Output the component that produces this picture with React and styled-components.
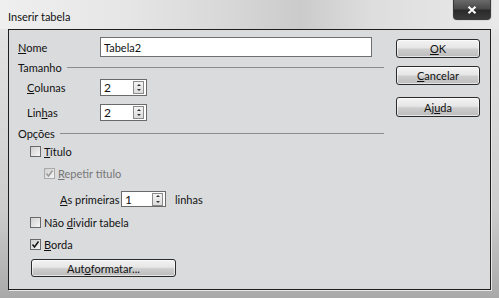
import React from 'react';
import styled, { createGlobalStyle } from 'styled-components';

const Global = createGlobalStyle`
    html, body {
        margin: 0;
        padding: 0;
        background: #d0d0d0;
    }
    body {
        font-family: Lato, "Noto Sans", sans-serif;
        font-size: 11px;
        color: #111;
    }
`

const Window = styled.div`
    width: 499px;
    height: 298px;
    display: flex;
    flex-direction: column;
    background: linear-gradient(180deg, #f4f4f4 0%, #e2e2e2 12%, #cdcdcd 70%, #a9a9a9 100%);
    overflow: hidden;
`

const TitleBar = styled.div`
    height: 29px;
    display: flex;
    align-items: flex-start;
    padding: 0 8px 0 8px;
    box-sizing: border-box;
    background: linear-gradient(90deg, #efefef 0%, #e6e6e6 25%, #d8d8d8 45%, #cbcbcb 60%, #dedede 75%, #e9e9e9 100%);
`

const Title = styled.span`
    font-size: 11px;
    color: #111;
    margin-top: 10px;
`

const CloseButton = styled.div`
    margin-left: auto;
    width: 38px;
    height: 20px;
    box-sizing: border-box;
    border: 1px solid #3a3a3a;
    border-top: none;
    border-radius: 0 0 4px 4px;
    background: linear-gradient(180deg, #6a6a6a 0%, #4a4a4a 45%, #2a2a2a 55%, #3a3a3a 100%);
    display: flex;
    align-items: center;
    justify-content: center;
    box-shadow: 0 0 0 1px #d8d8d8;
`

const Client = styled.div`
    flex: 1;
    margin: 0 8px 8px 8px;
    border: 1px solid #1e1e1e;
    background: #dadbdd;
    display: flex;
    box-shadow: 1px 1px 0 #e8e8e8;
`

const Form = styled.div`
    width: 375px;
    padding-top: 7px;
    box-sizing: border-box;
    display: flex;
    flex-direction: column;
`

const Buttons = styled.div`
    margin-left: 12px;
    padding-top: 9px;
    display: flex;
    flex-direction: column;
`

const Row = styled.div`
    display: flex;
    align-items: center;
    height: ${p => p.$h || 14}px;
    margin-top: ${p => p.$mt || 0}px;
    padding-left: ${p => p.$indent || 0}px;
`

const Label = styled.span`
    width: ${p => p.$w ? `${p.$w}px` : 'auto'};
    margin-left: ${p => p.$ml || 0}px;
    flex-shrink: 0;
    color: ${p => p.$disabled ? '#767676' : '#111'};
    white-space: nowrap;
`

const TextInput = styled.div`
    flex: 1;
    margin-right: 12px;
    height: 20px;
    box-sizing: border-box;
    border: 1px solid #707070;
    background: #fff;
    display: flex;
    align-items: center;
    padding-left: 3px;
`

const HeaderRow = styled.div`
    display: flex;
    align-items: center;
    height: 14px;
    padding-left: 9px;
    margin-top: ${p => p.$mt}px;
`

const HeaderLine = styled.div`
    flex: 1;
    margin-left: 5px;
    border-top: 1px solid #8c8c8c;
`

const SpinBox = styled.div`
    width: ${p => p.$w}px;
    height: ${p => p.$h}px;
    box-sizing: border-box;
    border: 1px solid #6a6a6a;
    background: #fff;
    display: flex;
    align-items: center;
    padding: 0 2px 0 3px;
`

const SpinValue = styled.span`
    flex: 1;
    font-size: 12px;
`

const SpinArrows = styled.div`
    width: 11px;
    height: 13px;
    box-sizing: border-box;
    border: 1px solid #8a8a8a;
    background: linear-gradient(180deg, #f4f4f4, #dcdcdc);
    display: flex;
    flex-direction: column;
    align-items: center;
    justify-content: space-around;
`

const Arrow = styled.div`
    width: 0;
    height: 0;
    border-left: 2px solid transparent;
    border-right: 2px solid transparent;
    ${p => p.$down ? 'border-top: 2px solid #333;' : 'border-bottom: 2px solid #333;'}
`

const Box = styled.div`
    width: 11px;
    height: 11px;
    box-sizing: border-box;
    border: 1px solid ${p => p.$disabled ? '#a8a8a8' : '#6a6a6a'};
    background: linear-gradient(135deg, #d0d0d0, #f6f6f6);
    display: flex;
    align-items: center;
    justify-content: center;
    margin-right: 3px;
`

const Button = styled.div`
    width: ${p => p.$w || 84}px;
    height: ${p => p.$h || 19}px;
    margin-top: ${p => p.$mt || 0}px;
    margin-left: ${p => p.$ml || 0}px;
    box-sizing: border-box;
    border: 1px solid #2b2b2b;
    border-radius: 3px;
    background: linear-gradient(180deg, #f3f3f3 0%, #e6e6e6 45%, #cdcdcd 55%, #bcbcbc 100%);
    box-shadow: inset 0 0 0 1px rgba(255,255,255,0.6);
    display: flex;
    align-items: center;
    justify-content: center;
    color: #111;
`

const U = styled.span`
    text-decoration: underline;
    text-underline-offset: 1px;
`

const Check = ({ color }) => (
    <svg width="9" height="9" viewBox="0 0 9 9">
        <path d="M1.5 4.5 L3.5 7 L7.5 1.5" fill="none" stroke={color} strokeWidth="1.6" />
    </svg>
)

const Spin = ({ value, w, h }) => (
    <SpinBox $w={w} $h={h}>
        <SpinValue>{value}</SpinValue>
        <SpinArrows>
            <Arrow />
            <Arrow $down />
        </SpinArrows>
    </SpinBox>
)

const CheckRow = ({ mt, indent, checked, disabled, children }) => (
    <Row $mt={mt} $indent={indent}>
        <Box $disabled={disabled}>
            {checked && <Check color={disabled ? '#9a9a9a' : '#1a1a1a'} />}
        </Box>
        <Label $disabled={disabled}>{children}</Label>
    </Row>
)

const App = () => {
    return (
        <>
            <Global />
            <Window>
                <TitleBar>
                    <Title>Inserir tabela</Title>
                    <CloseButton>
                        <svg width="10" height="8" viewBox="0 0 10 8">
                            <path d="M1.5 0.8 L8.5 7.2 M8.5 0.8 L1.5 7.2" stroke="#fff" strokeWidth="2" />
                        </svg>
                    </CloseButton>
                </TitleBar>
                <Client>
                    <Form>
                        <Row $h={20} $indent={9}>
                            <Label $w={82}><U>N</U>ome</Label>
                            <TextInput>Tabela2</TextInput>
                        </Row>
                        <HeaderRow $mt={3}>
                            <Label>Tamanho</Label>
                            <HeaderLine />
                        </HeaderRow>
                        <Row $h={17} $mt={5} $indent={18}>
                            <Label $w={73}><U>C</U>olunas</Label>
                            <Spin value="2" w={47} h={17} />
                        </Row>
                        <Row $h={17} $mt={8} $indent={18}>
                            <Label $w={73}>Lin<U>h</U>as</Label>
                            <Spin value="2" w={47} h={17} />
                        </Row>
                        <HeaderRow $mt={5}>
                            <Label>Opções</Label>
                            <HeaderLine />
                        </HeaderRow>
                        <CheckRow mt={4} indent={21}><U>T</U>ítulo</CheckRow>
                        <CheckRow mt={8} indent={35} checked disabled><U>R</U>epetir título</CheckRow>
                        <Row $h={16} $mt={11} $indent={51}>
                            <Label $w={61}><U>A</U>s primeiras</Label>
                            <Spin value="1" w={45} h={16} />
                            <Label $ml={9}>linhas</Label>
                        </Row>
                        <CheckRow mt={8} indent={21}>Não <U>d</U>ividir tabela</CheckRow>
                        <CheckRow mt={8} indent={21} checked><U>B</U>orda</CheckRow>
                        <Button $w={145} $h={18} $mt={8} $ml={22}>Aut<U>o</U>formatar...</Button>
                    </Form>
                    <Buttons>
                        <Button><U>O</U>K</Button>
                        <Button $mt={8}><U>C</U>ancelar</Button>
                        <Button $h={20} $mt={12}>Aj<U>u</U>da</Button>
                    </Buttons>
                </Client>
            </Window>
        </>
    )
}

export default App;
